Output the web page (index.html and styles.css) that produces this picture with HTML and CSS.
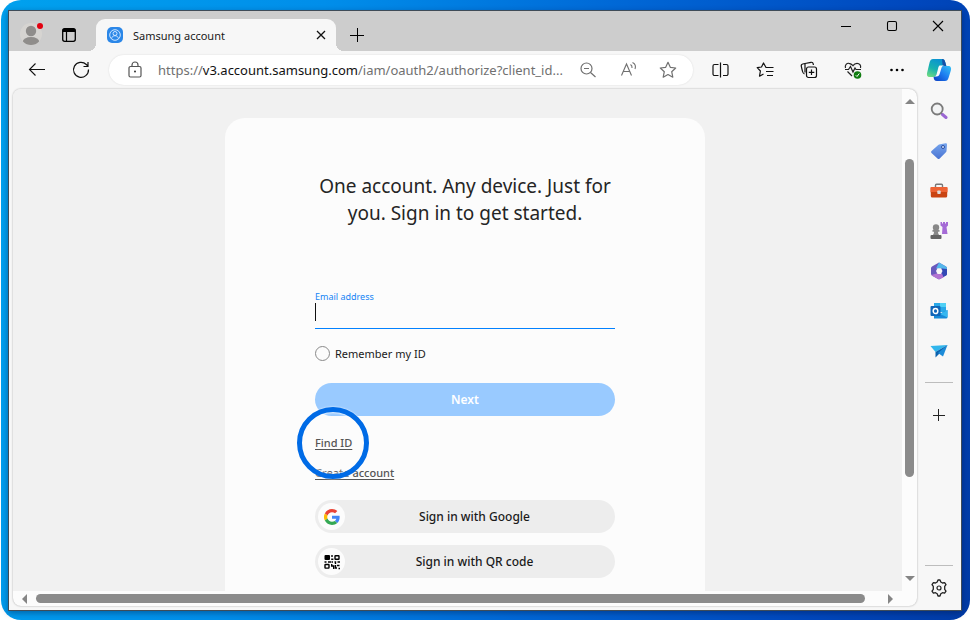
FILE: index.html
```html
<!DOCTYPE html>
<html lang="en">
<head>
<meta charset="utf-8">
<title>Samsung account</title>
<link rel="stylesheet" href="styles.css">
</head>
<body>
<div class="desktop">
<div class="window">
  <header class="titlebar">
    <button class="icon-btn profile" aria-label="Profile">
      <svg width="26" height="26" viewBox="0 0 26 26"><defs><clipPath id="pc"><circle cx="12" cy="14" r="11"/></clipPath></defs><circle cx="12" cy="14" r="11" fill="#d6d4d1"/><g clip-path="url(#pc)" fill="#8f8d8b"><circle cx="12" cy="11" r="5.2"/><ellipse cx="12" cy="22" rx="8.3" ry="5"/></g><circle cx="21" cy="6" r="3" fill="#e3000f"/></svg>
    </button>
    <button class="icon-btn actions" aria-label="Tab actions">
      <svg width="16" height="16" viewBox="0 0 16 16"><rect x="1.7" y="1.7" width="12.6" height="12.6" rx="2" fill="none" stroke="#000" stroke-width="1.3"/><path d="M1.5 5V3.5a2 2 0 0 1 2-2h9a2 2 0 0 1 2 2V5z"/><path d="M5.500 5v9" stroke="#000" stroke-width="1.2"/></svg>
    </button>
    <div class="tab">
      <svg width="16" height="16" viewBox="0 0 16 16"><rect width="16" height="16" rx="5" fill="#2b87e8"/><g fill="none" stroke="#cfe6ff" stroke-width="1"><circle cx="8" cy="8" r="5.3"/><circle cx="8" cy="6.5" r="2"/><path d="M4.6 11.7c.3-2 1.5-3 3.4-3s3.100 1 3.400 3"/></g></svg>
      <span class="tab-title">Samsung account</span>
      <button class="icon-btn" aria-label="Close tab"><svg width="10" height="10" viewBox="0 0 10 10"><path d="M1 1l8 8M9 1l-8 8" stroke="#111" stroke-width="1.3"/></svg></button>
    </div>
    <button class="icon-btn new-tab" aria-label="New tab"><svg width="14" height="14" viewBox="0 0 14 14"><path d="M0 7.500h14M7.500 0v14" stroke="#000"/></svg></button>
    <div class="controls">
      <button class="icon-btn" aria-label="Minimize"><svg width="12" height="12" viewBox="0 0 12 12"><path d="M1 6.500h10" stroke="#000"/></svg></button>
      <button class="icon-btn" aria-label="Maximize"><svg width="12" height="12" viewBox="0 0 12 12"><rect x="1.500" y="1.500" width="9" height="9" rx="1.500" fill="none" stroke="#000" stroke-width="1.100"/></svg></button>
      <button class="icon-btn" aria-label="Close window"><svg width="12" height="12" viewBox="0 0 12 12"><path d="M1 1l10 10M11 1L1 11" stroke="#000" stroke-width="1.100"/></svg></button>
    </div>
  </header>

  <div class="body">
    <div class="main">
      <nav class="toolbar">
        <button class="icon-btn" aria-label="Back"><svg width="20" height="20" viewBox="0 0 20 20"><path d="M8.500 3.500L2.500 9.500l6 6M2.500 9.500h15.500" fill="none" stroke="#111" stroke-width="1.100"/></svg></button>
        <button class="icon-btn" aria-label="Refresh"><svg width="20" height="20" viewBox="0 0 20 20"><path d="M17.500 9.500a7.500 7.500 0 1 1-2.200-5l1.700 1.700M17 2v4.500h-4.500" fill="none" stroke="#111" stroke-width="1.200"/></svg></button>
        <div class="address">
          <svg width="20" height="20" viewBox="0 0 20 20"><path d="M5.500 6.500h9a1.500 1.500 0 0 1 1.500 1.500v7.500a1.500 1.500 0 0 1-1.500 1.500h-9A1.500 1.500 0 0 1 4 15.500V8a1.500 1.500 0 0 1 1.500-1.500zM7 6.500V5a3 3 0 0 1 6 0v1.500" fill="none" stroke="#555" stroke-width="1.200"/><circle cx="10" cy="11.500" r="1" fill="#333"/></svg>
          <span class="url">https://<b>v3.account.samsung.com</b>/iam/oauth2/authorize?client_id...</span>
          <button class="icon-btn" aria-label="Zoom out"><svg width="20" height="20" viewBox="0 0 20 20"><g fill="none" stroke="#707070" stroke-width="1.200"><circle cx="8.500" cy="8.500" r="5.500"/><path d="M12.500 12.500l5 4.500M6 8.500h5"/></g></svg></button>
          <button class="icon-btn" aria-label="Read aloud"><svg width="20" height="20" viewBox="0 0 20 20"><g fill="none" stroke="#707070" stroke-width="1.100"><path d="M3.500 15.500l5-11.500 5 11.500M5.200 11.500h6.600M12.500 4.500c1.500 1 1.700 2.300 1.500 3.500M14.500 2.500c3 1.500 3.400 4 2.500 6.500"/></g></svg></button>
          <button class="icon-btn" aria-label="Add to favorites"><svg width="20" height="20" viewBox="0 0 20 20"><path d="M10 2.300l2.300 5 5.400.7-4 3.700 1.100 5.500L10 14.500l-4.800 2.700 1.100-5.500-4-3.700 5.400-.7z" fill="none" stroke="#707070" stroke-width="1.200" stroke-linejoin="round"/></svg></button>
        </div>
        <button class="icon-btn" aria-label="Split screen"><svg width="20" height="20" viewBox="0 0 20 20"><path d="M7.500 4.500h-4a1.500 1.500 0 0 0-1.500 1.500v8a1.500 1.500 0 0 0 1.500 1.500h4M12 4.500h3.500A1.500 1.500 0 0 1 17 6v8a1.500 1.500 0 0 1-1.500 1.500H12M9.500 2.500v15" fill="none" stroke="#111" stroke-width="1.200"/></svg></button>
        <button class="icon-btn" aria-label="Favorites"><svg width="20" height="20" viewBox="0 0 20 20"><path d="M16 7.500h-5L8.500 3 6.500 7l-4.300.7 3.200 3.300-.9 5.200 4-2.200M13 7.500h5.500M11 11.500h7.500M12 15.500h6" fill="none" stroke="#111" stroke-width="1.200" stroke-linejoin="round"/></svg></button>
        <button class="icon-btn" aria-label="Collections"><svg width="20" height="20" viewBox="0 0 20 20"><g fill="none" stroke="#111" stroke-width="1.200"><rect x="7.500" y="7" width="10" height="10.500" rx="2"/><path d="M12.500 9.500v5.500M9.800 12.300h5.500M5.500 14c-1.300-.5-1.800-1.500-2.100-3L2.300 6.300c-.3-1.300.3-2 1.400-2.300l2.300-.5 6-1.200c1.200-.2 2 .4 2.200 1.500l.2 1.200M6 3.500v9"/></g></svg></button>
        <button class="icon-btn" aria-label="Browser essentials"><svg width="20" height="20" viewBox="0 0 20 20"><g fill="none" stroke="#222" stroke-width="1.200"><path d="M2.500 8C1.500 5 4 3 6 3.300c2 .2 3 1.200 4 2.400 1-1.500 2.500-2.400 4-2.400 2.500 0 4.200 2.200 3.500 4.700M2 9.500h3.500l2-3 2.500 5.500 2-4 1 1.500h5M4.500 11.500L9 16"/></g><circle cx="14.500" cy="15" r="3.800" fill="#107c10"/><path d="M12.800 15.300l1.200 1.200 2.300-3" fill="none" stroke="#fff"/></svg></button>
        <button class="icon-btn" aria-label="More"><svg width="20" height="20" viewBox="0 0 20 20"><circle cx="4.500" cy="10" r="1.300"/><circle cx="10" cy="10" r="1.300"/><circle cx="15.500" cy="10" r="1.300"/></svg></button>
      </nav>

      <div class="viewport">
        <main class="page">
          <form class="card">
            <h1>One account. Any device. Just for<br>you. Sign in to get started.</h1>
            <label class="field-label" for="email">Email address</label>
            <input class="field" id="email" type="text">
            <label class="remember" for="remember"><input type="radio" id="remember">Remember my ID</label>
            <button class="next" type="button">Next</button>
            <div class="find"><a href="#">Find ID</a><span class="ring"></span></div>
            <div class="create"><a href="#">Create account</a></div>
            <button class="social" type="button"><span class="badge"><svg width="16" height="16" viewBox="0 0 48 48"><path fill="#ea4335" d="M24 9.500c3.500 0 6.700 1.200 9.200 3.600l6.900-6.900C35.900 2.400 30.500 0 24 0 14.600 0 6.500 5.400 2.600 13.200l8 6.200C12.400 13.700 17.700 9.500 24 9.500z"/><path fill="#4285f4" d="M47 24.600c0-1.600-.2-3.100-.4-4.600H24v9h12.900c-.6 3-2.200 5.500-4.700 7.200l7.700 6c4.500-4.200 7.100-10.400 7.100-17.600z"/><path fill="#fbbc05" d="M10.500 28.600a14.500 14.500 0 0 1 0-9.200l-8-6.200a24 24 0 0 0 0 21.600z"/><path fill="#34a853" d="M24 48c6.500 0 11.900-2.100 15.900-5.800l-7.700-6c-2.200 1.400-4.900 2.300-8.200 2.300-6.300 0-11.600-4.200-13.500-9.900l-8 6.200C6.500 42.600 14.600 48 24 48z"/></svg></span><span class="social-text">Sign in with Google</span></button>
            <button class="social" type="button"><span class="badge"><svg width="16" height="16" viewBox="0 0 16 16"><rect x="0.500" y="1" width="5.500" height="5" rx="1"/><g fill="none" stroke="#000" stroke-width="1.400"><rect x="11" y="1.700" width="4" height="3.600" rx=".5"/><rect x="1" y="10.500" width="4" height="3.600" rx=".5"/><path d="M8 1v2M7.200 5.300h2.200M.5 8h2M4 8h3.500M8 8h1M10.500 8h1v2M13.500 8H16M7.700 10v2h2v3M11.500 11v3h1.500M13 11.500h2.500M14.500 14.500H16"/></g></svg></span><span class="social-text">Sign in with QR code</span></button>
          </form>
        </main>
        <div class="vbar"><i class="arrow up"></i><i class="thumb"></i><i class="arrow down"></i></div>
        <div class="hbar"><i class="arrow left"></i><i class="thumb"></i><i class="arrow right"></i></div>
      </div>
    </div>

    <aside class="sidebar">
      <button class="icon-btn copilot" aria-label="Copilot"><svg width="26" height="26" viewBox="0 0 26 26"><defs><linearGradient id="ca" x1="0" y1="1" x2=".5" y2="0"><stop offset="0" stop-color="#7be07a"/><stop offset=".5" stop-color="#18b2b0"/><stop offset="1" stop-color="#0b94d0"/></linearGradient><linearGradient id="cb" x1="0" y1="1" x2="1" y2="0"><stop offset="0" stop-color="#0a3cc0"/><stop offset=".5" stop-color="#1d7cf0"/><stop offset="1" stop-color="#35c3f5"/></linearGradient></defs><path d="M19 24h-8c-2.500 0-3.200-1.500-3.500-4.500L12 9h10c3 0 3.500 2 2.700 5l-2.200 7C21.800 23 21 24 19 24z" fill="url(#cb)"/><path d="M7 2h9c2 0 2.700 1.300 3.200 3l1 4h-3l-5 3-1.500 5c-.6 2-1.500 3-3.700 3H4c-3 0-3.500-2-2.700-5L3.700 5C4.400 3 5.200 2 7 2z" fill="url(#ca)"/><path d="M16 2c2 0 2.700 1.300 3.200 3l1.200 4H17c-1-2-.5-5-1-7z" fill="#1650a8"/><path d="M13.500 8.500h5.300c-2 0-3 1-3.500 3l-1.500 5c-.5 2-1.500 3-3.300 3H7.800c1.700 0 2.500-1.200 3-3l1.300-5c.3-1.500.7-2.400 1.400-3z" fill="#fafafa"/></svg></button>
      <button class="icon-btn" aria-label="Search"><svg width="18" height="18" viewBox="0 0 18 18"><path d="M11 11l2 2" stroke="#777" stroke-width="2"/><path d="M12.500 12.500l3.500 3" stroke="#9b67d3" stroke-width="3" stroke-linecap="round"/><circle cx="7.200" cy="7" r="5.500" fill="#f3f4f5" stroke="#7b7b7b" stroke-width="1.800"/></svg></button>
      <button class="icon-btn" aria-label="Shopping"><svg width="18" height="18" viewBox="0 0 18 18"><defs><linearGradient id="tg" x2="0" y2="1"><stop stop-color="#76a5ed"/><stop offset="1" stop-color="#4a74d3"/></linearGradient></defs><path d="M9 2.500L15.500 1.300a1.300 1.300 0 0 1 1.500 1.400L16.500 9a2 2 0 0 1-.6 1.200L9.700 16.500a1.500 1.500 0 0 1-2.200 0L1.500 11a1.400 1.400 0 0 1 0-2L8 3.200z" fill="url(#tg)"/><circle cx="13" cy="5" r="1.500" fill="#dceaff" stroke="#2b4da0"/></svg></button>
      <button class="icon-btn" aria-label="Tools"><svg width="18" height="18" viewBox="0 0 18 18"><path d="M5.500 6V3.500q0-1.300 1-1.300h5q1 0 1 1.300V6" fill="none" stroke="#777" stroke-width="1.400"/><rect x=".3" y="5" width="17.400" height="5.500" rx="1" fill="#ed6335"/><path d="M.8 10h16.400v4a1.500 1.500 0 0 1-1.500 1.500H2.300A1.500 1.500 0 0 1 .8 14z" fill="#c94413"/><rect x="7.300" y="8.500" width="3.400" height="3.600" rx=".8" fill="#ddd"/></svg></button>
      <button class="icon-btn" aria-label="Games"><svg width="18" height="18" viewBox="0 0 18 18"><path d="M10.500 0h1.500v1.500h1V0h2v1.500h1V0h2v3.500L16.500 5l1 7H12l.5-7-2-1.500z" fill="#a56bd6"/><g fill="#888"><circle cx="6" cy="5.500" r="3.200"/><path d="M2.500 8h7v1.700H8c0 2 .6 3 2 3.800H2c1.500-.8 2-1.800 2-3.800H2.500z"/><rect x=".5" y="13" width="11" height="4" rx="1" fill="#636363"/></g></svg></button>
      <button class="icon-btn" aria-label="Microsoft 365"><svg width="18" height="18" viewBox="0 0 18 18"><path d="M9 .500l7 4a2 2 0 0 1 1 1.700v5.600a2 2 0 0 1-1 1.700l-6 3.500a2 2 0 0 1-2 0l-6-3.500a2 2 0 0 1-1-1.700V6.200a2 2 0 0 1 1-1.700z" fill="#6959bd"/><path d="M9 .500l7 4a2 2 0 0 1 1 1.700V9L12 6.500 6 6.500z" fill="#55b7ea"/><path d="M17 7v5a2 2 0 0 1-1 1.500L13 15l-2-3.500 1-5z" fill="#3349b5"/><path d="M1.500 13l5-1.500H12l1.500 4L10 17a2 2 0 0 1-2 0l-6-3.300z" fill="#b273d2"/><path d="M7.500 6.200h3.500L12.500 9 11 12H7.500L6 9z" fill="#f7f7f7"/></svg></button>
      <button class="icon-btn" aria-label="Outlook"><svg width="18" height="18" viewBox="0 0 18 18"><path d="M4 1h12v9H4z" fill="#28a8e8"/><path d="M10 1h6v4h-6z" fill="#50d0f5"/><path d="M4 8l7 3 6.500-3v7a1.500 1.500 0 0 1-1.500 1.500H4z" fill="#168ad8"/><path d="M17.500 8v7.500L10 12z" fill="#35b7f0"/><rect x=".5" y="4" width="10" height="10" rx="1" fill="#0f65b8"/><ellipse cx="5.500" cy="9" rx="2.300" ry="2.600" fill="none" stroke="#fff" stroke-width="1.500"/></svg></button>
      <button class="icon-btn" aria-label="Drop"><svg width="18" height="18" viewBox="0 0 18 18"><path d="M.5 4L17.500 3l-12 7z" fill="#31b6ec"/><path d="M17.500 3L5.500 10v5.500l3-3z" fill="#0b62ae"/><path d="M17.500 3L8 11l5 3.500z" fill="#1c8bd8"/></svg></button>
      <hr>
      <button class="icon-btn add" aria-label="Add app"><svg width="12" height="12" viewBox="0 0 12 12"><path d="M0 6.500h12M5.500 0v12" stroke="#222"/></svg></button>
      <hr class="bottom">
      <button class="icon-btn settings" aria-label="Settings"><svg width="18" height="18" viewBox="0 0 18 18"><path d="M7.200 3L8 1h2l.8 2 1.700 1 2.100-.4 1.400 2-1.300 1.800v2.900l1.300 1.800-1.400 2-2.100-.4-1.700 1L10 17H8l-.8-2.300-1.700-1-2.100.4-1.400-2 1.300-1.800V7.400L2 5.600l1.400-2 2.100.4z" fill="none" stroke="#222" stroke-width="1.300" stroke-linejoin="round"/><circle cx="9" cy="9" r="2" fill="none" stroke="#222" stroke-width="1.200"/></svg></button>
    </aside>
  </div>
</div>
</div>
</body>
</html>
```
FILE: styles.css
```css
* { box-sizing: border-box; }
body { margin: 0; background: #fff; font-family: "Noto Sans", sans-serif; color: #1a1a1a; }
button { font: inherit; color: inherit; border: 0; padding: 0; background: none; }
svg { display: block; flex: none; }
.icon-btn { display: flex; align-items: center; justify-content: center; flex: none; }

.desktop { height: 100vh; margin-left: 1px; padding: 10px 8px 9px 7px; border-radius: 20px; background: linear-gradient(100deg, #00a1ee 0%, #008eea 30%, #0067d6 58%, #0047bd 85%, #003ba6 100%); }
.window { height: 100%; display: flex; flex-direction: column; border: 1px solid #3f4c58; background: #f7f7f7; overflow: hidden; box-shadow: 0 2px 6px rgba(0, 20, 60, 0.4); }

.titlebar { height: 40px; flex: none; display: flex; align-items: flex-end; background: #cdcdcd; }
.profile { margin: 0 0 5px 10px; }
.actions { margin: 0 19px 8px 16px; }
.tab { position: relative; display: flex; align-items: center; width: 240px; height: 32px; padding: 0 10px 0 11px; border-radius: 9px 9px 0 0; background: #f7f7f7; }
.tab::before, .tab::after { content: ""; position: absolute; bottom: 0; width: 8px; height: 8px; }
.tab::before { left: -8px; background: radial-gradient(circle at 0 0, transparent 8px, #f7f7f7 8px); }
.tab::after { right: -8px; background: radial-gradient(circle at 100% 0, transparent 8px, #f7f7f7 8px); }
.tab-title { flex: 1; margin-left: 10px; font-size: 11px; }
.new-tab { margin: 0 0 9px 14px; }
.controls { display: flex; gap: 34px; margin-left: auto; padding-right: 17px; align-self: flex-start; padding-top: 9px; }

.body { flex: 1; min-height: 0; display: flex; }
.main { flex: 1; min-width: 0; display: flex; flex-direction: column; }
.toolbar { height: 38px; flex: none; display: flex; align-items: center; gap: 24px; padding: 0 10px 0 18px; }
.address { flex: 1; min-width: 0; height: 30px; margin: 0 -6px; display: flex; align-items: center; gap: 20px; padding: 0 15px 0 16px; border-radius: 15px; background: #fff; box-shadow: 0 0 2px rgba(0, 0, 0, 0.12); }
.url { flex: 1; min-width: 0; margin: 0 -8px 0 -7px; white-space: nowrap; font-size: 13px; color: #707070; }
.url b { font-weight: 400; color: #111; }

.viewport { flex: 1; min-height: 0; margin: 0 0 4px 4px; display: grid; grid-template: minmax(0, 1fr) 15px / minmax(0, 1fr) 15px; border-radius: 8px; background: #fcfcfc; box-shadow: 0 0 2px rgba(0, 0, 0, 0.35); overflow: hidden; }
.page { overflow: hidden; padding: 29px 0 0 15px; background: #f1f1f1; }
.card { width: 480px; min-height: 500px; margin: 0 auto; padding: 55px 90px 20px; border-radius: 20px; background: #fcfcfc; display: flex; flex-direction: column; font-size: 12px; }
h1 { margin: 0 -20px 64px; text-align: center; font-size: 19px; line-height: 27px; font-weight: 400; color: #252525; }
.field-label { font-size: 9px; line-height: 12px; color: #1584f5; }
.field { height: 26px; border: 0; border-bottom: 1px solid #0381fe; outline: 0; padding: 0; background: linear-gradient(#111, #111) 0 0 / 1px 18px no-repeat; font: inherit; }
.remember { display: flex; align-items: center; gap: 5px; height: 20px; margin: 14px 0 20px; font-size: 11px; }
.remember input { appearance: none; width: 15px; height: 15px; margin: 0; border: 1px solid #8a8a8a; border-radius: 50%; }
.next { height: 33px; margin-bottom: 17px; border-radius: 17px; background: #99caff; color: #fff; font-weight: 600; }
.find, .create { position: relative; height: 20px; line-height: 20px; margin-bottom: 10px; font-size: 11px; }
.create { margin-bottom: 17px; }
.card a { color: #555; font-weight: 500; text-underline-offset: 2px; }
.ring { position: absolute; z-index: 1; left: -18px; top: -26px; width: 72px; height: 72px; border: 5px solid #006be6; border-radius: 50%; box-shadow: 0 0 2px #fff, inset 0 0 2px 1px rgba(252, 252, 252, 0.8); }
.social { display: flex; align-items: center; height: 33px; margin-bottom: 12px; padding: 3px; border-radius: 17px; background: #ededed; font-weight: 500; }
.badge { display: grid; place-items: center; width: 27px; height: 27px; border-radius: 50%; background: #fcfcfc; }
.social-text { flex: 1; padding-right: 8px; }

.vbar, .hbar { display: flex; align-items: center; }
.vbar { flex-direction: column; padding: 10px 0; }
.hbar { padding: 0 9px; }
.thumb { border-radius: 5px; background: #8b8b8b; }
.vbar .thumb { width: 9px; height: 66%; margin-top: 55px; }
.hbar .thumb { height: 9px; flex: 1; margin: 0 23px 0 9px; }
.arrow { border: 5px solid transparent; }
.up { border-top: 0; border-bottom-color: #858585; }
.down { border-bottom: 0; border-top-color: #858585; margin-top: auto; }
.left { border-left: 0; border-right-color: #858585; }
.right { border-right: 0; border-left-color: #858585; }

.sidebar { width: 44px; flex: none; display: flex; flex-direction: column; align-items: center; gap: 22px; padding: 6px 0 13px; }
.copilot { margin-bottom: -3px; }
.sidebar hr { width: 28px; height: 1px; margin: 0; border: 0; background: #bdbdbd; }
.add { margin-top: 4px; }
.sidebar .bottom { margin-top: auto; }
.settings { margin-top: -9px; }
```
